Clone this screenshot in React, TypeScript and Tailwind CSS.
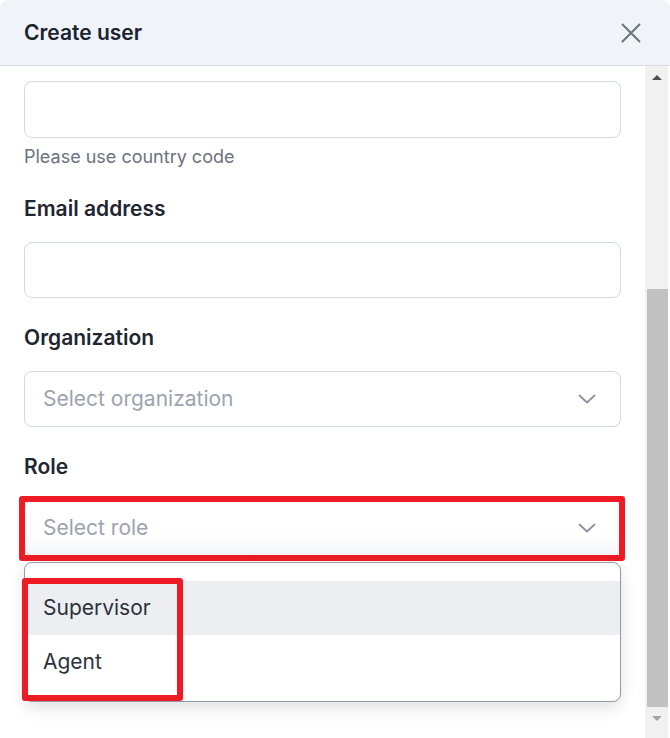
import React from 'react';

const ChevronDown = () => (
  <svg width="18" height="10" viewBox="0 0 18 10" fill="none" className="text-[#8a93a3]">
    <path d="M1.5 1.5L9 8.5L16.5 1.5" stroke="currentColor" strokeWidth="1.8" strokeLinecap="round" strokeLinejoin="round" />
  </svg>
);

const Field = ({ label, children }: { label: string; children: React.ReactNode }) => (
  <div>
    <label className="block text-[21px] leading-[28px] font-semibold text-[#1f2631] mt-[26px] mb-[19px]">{label}</label>
    {children}
  </div>
);

const App = () => {
  return (
    <div className="w-[670px] h-[738px] overflow-hidden bg-white font-['Inter',sans-serif]">
      {/* Header */}
      <div className="h-[66px] bg-[#f0f4f9] border-b border-[#d9dee5] rounded-t-lg flex items-center justify-between pl-6 pr-[28px]">
        <h2 className="text-[21px] font-semibold text-[#1c2330]">Create user</h2>
        <svg width="22" height="22" viewBox="0 0 22 22" fill="none">
          <path d="M2 2L20 20M20 2L2 20" stroke="#6b7280" strokeWidth="2" />
        </svg>
      </div>

      <div className="flex h-[672px]">
        {/* Body */}
        <div className="flex-1 px-6 pt-[15px]">
          <input className="w-full h-[57px] border border-[#d3d8df] rounded-lg bg-white outline-none" />
          <p className="mt-[7px] text-[18px] leading-6 text-[#6b7280]">Please use country code</p>

          <Field label="Email address">
            <input className="w-full h-[56px] border border-[#d3d8df] rounded-lg bg-white outline-none" />
          </Field>

          <Field label="Organization">
            <div className="h-[56px] border border-[#d3d8df] rounded-lg flex items-center justify-between pl-[18px] pr-6">
              <span className="text-[21px] text-[#9ca3af]">Select organization</span>
              <ChevronDown />
            </div>
          </Field>

          <Field label="Role">
            <div className="relative">
              <div className="h-[56px] border border-[#d3d8df] rounded-lg flex items-center justify-between pl-[18px] pr-6 bg-gradient-to-b from-white from-60% to-[#f4f5f7]">
                <span className="text-[21px] text-[#9ca3af]">Select role</span>
                <ChevronDown />
              </div>
              <div className="absolute -left-[5px] -right-[4px] -top-[4px] -bottom-[5px] border-[6px] border-[#ed1c24] rounded-[3px]" />
            </div>

            <div className="relative mt-[6px] h-[140px] border border-[#8f99aa] rounded-lg bg-white shadow-[0_6px_16px_rgba(0,0,0,0.12)] pt-[18px]">
              <div className="h-[54px] bg-[#eceef1] flex items-center pl-[18px] text-[21px] text-[#2b313c]">Supervisor</div>
              <div className="h-[54px] flex items-center pl-[18px] text-[21px] text-[#2b313c]">Agent</div>
              <div className="absolute -left-[3px] top-[15px] w-[161px] h-[123px] border-[6px] border-[#ed1c24] rounded-[3px]" />
            </div>
          </Field>
        </div>

        {/* Scrollbar */}
        <div className="w-[23px] bg-[#f1f1f1] flex flex-col">
          <div className="h-[23px] flex items-center justify-center">
            <div className="w-0 h-0 border-l-[5px] border-r-[5px] border-b-[5px] border-l-transparent border-r-transparent border-b-[#505050]" />
          </div>
          <div className="h-[200px]" />
          <div className="h-[418px] ml-[2px] bg-[#c1c1c1]" />
          <div className="h-[23px] flex items-center justify-center">
            <div className="w-0 h-0 border-l-[5px] border-r-[5px] border-t-[5px] border-l-transparent border-r-transparent border-t-[#a3a3a3]" />
          </div>
        </div>
        <div className="w-[2px] bg-white" />
      </div>
    </div>
  );
};

export default App;
